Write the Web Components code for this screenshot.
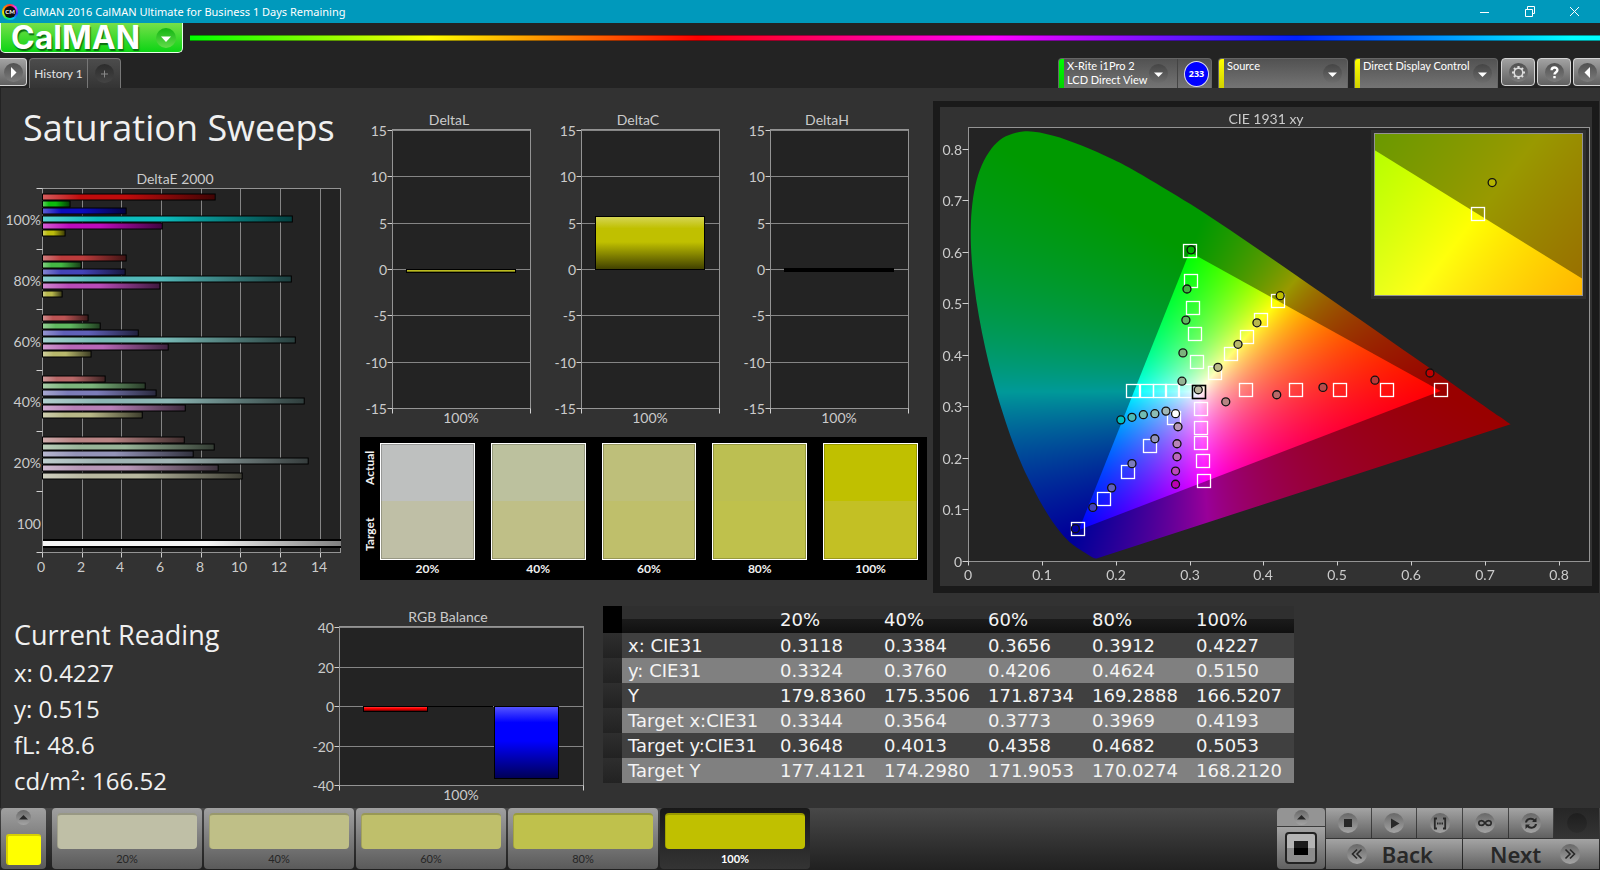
<!DOCTYPE html>
<html lang="en">
<head>
<meta charset="utf-8">
<title>CalMAN 2016</title>
<style>
html,body{margin:0;background:#323232}
body{font-family:"Open Sans","Noto Sans",sans-serif;color:#f0f0f0}
</style>
</head>
<body>
<cal-app></cal-app>
<script>
const define=(name,css,html,Base=HTMLElement,init)=>{
  const tpl=document.createElement('template');
  tpl.innerHTML=`<style>*{box-sizing:border-box}button{font:inherit;color:inherit;border:0;margin:0;padding:0;background:none}${css}</style>${html}`;
  customElements.define(name,class extends Base{
    constructor(){super();this.attachShadow({mode:'open'}).append(tpl.content.cloneNode(true));}
    connectedCallback(){if(super.connectedCallback)super.connectedCallback();if(init)init.call(this,this.shadowRoot);}
  });
};

/* ---------- charts ---------- */
class Chart extends HTMLElement{
  connectedCallback(){
    new ResizeObserver(()=>this.refresh()).observe(this);
    this.refresh();
  }
  refresh(){
    const W=this.clientWidth,H=this.clientHeight;
    if(!W||!H)return;
    const svg=this.shadowRoot.querySelector('svg');
    svg.setAttribute('viewBox',`0 0 ${W} ${H}`);
    svg.innerHTML=this.draw(W,H);
  }
}
const chartCss=`:host{display:block;position:relative;min-width:0;font:14px Lato,"Open Sans",sans-serif}
svg{display:block;width:100%;height:100%;overflow:visible;position:absolute;inset:0}
text{fill:#cbcbcb}`;
const R=Math.round;
const line=(x1,y1,x2,y2,c='#858585')=>`<path d="M${R(x1)+.5} ${R(y1)+.5}L${R(x2)+.5} ${R(y2)+.5}" stroke="${c}" fill="none"/>`;
const frame=(l,t,r,b)=>`<rect x="${R(l)+.5}" y="${R(t)+.5}" width="${R(r-l)}" height="${R(b-t)}" fill="none" stroke="#949494"/>`;
const txt=(x,y,s,a='middle')=>`<text x="${R(x)}" y="${R(y)+5}" text-anchor="${a}">${s}</text>`;
const mix=(c,d,k)=>'rgb('+[1,3,5].map(i=>R(parseInt(c.substr(i,2),16)*(1-k)+d*k)).join()+')';
const grad=(id,c,v)=>`<linearGradient id="${id}" x1="0" y1="0" x2="${v?0:1}" y2="${v?1:0}"><stop offset="0" stop-color="${mix(c,255,.33)}"/><stop offset=".22" stop-color="${c}"/><stop offset=".48" stop-color="${c}"/><stop offset="1" stop-color="${mix(c,0,.66)}"/></linearGradient>`;

define('delta-e-chart',chartCss,'<svg role="img" aria-label="DeltaE 2000"></svg>',class extends Chart{
  draw(W,H){
    const l=41,r=W-8,t=23,b=H-28,k=(r-l)/15.03,g=(b-t)/6;
    const data=[['100%',8.76,1.44,4.27,12.65,6.09,1.19],['80%',4.27,2,4.22,12.6,5.97,1.04],['60%',2.35,2.96,4.88,12.8,6.39,2.5],['40%',3.21,5.23,5.78,13.25,7.25,5.08],['20%',7.2,8.71,7.65,13.45,8.91,10.12],['100']];
    const cols=[['#c00c0c','#0cbc0c','#0c0cbc','#0cbcbc','#bc0cbc','#bcbc0c'],['#bc3c3c','#44b844','#4444b8','#54b8b8','#b84cb8','#b8b84c'],['#bc5454','#60b860','#6060b8','#78bab6','#b868b8','#b8b86c'],['#b86868','#7cb47c','#7c7cb8','#8cb6b4','#b880b8','#b8b888'],['#b88484','#98b498','#9494b8','#a0b4b4','#b898b8','#b8b8a0']];
    let s=`<rect x="${l}" y="${t}" width="${r-l}" height="${b-t}" fill="#232323"/>`;
    for(let v=0;v<=14;v+=2){if(v)s+=line(l+v*k,t,l+v*k,b);s+=line(l+v*k,b,l+v*k,b+5,'#d0d0d0')+txt(l+v*k-1,b+15,v);}
    s+=frame(l,t,r,b)+txt(W/2,14,'DeltaE 2000');
    data.forEach((d,i)=>{
      s+=txt(l-1,t+g*(i+.5)+2,d[0],'end')+line(l-6,t+g*i,l,t+g*i,'#d0d0d0');
      d.slice(1).forEach((v,j)=>{
        const y=R(t+g*i+9+j*7.2),w=v*k;
        s+=grad('e'+i+j,cols[i][j])+`<rect x="${l}" y="${y-3.5}" width="${w}" height="7" fill="#000"/><rect x="${l+1}" y="${y-2.5}" width="${w-2}" height="5" fill="url(#e${i}${j})"/>`;
      });
    });
    s+=line(l-6,b,l,b,'#d0d0d0');
    s+=`<linearGradient id="w"><stop offset=".55" stop-color="#f4f4f4"/><stop offset="1" stop-color="#808080"/></linearGradient><rect x="${l+1}" y="${b-13}" width="${r-l}" height="9" fill="#000"/><rect x="${l+1}" y="${b-11}" width="${r-l}" height="5" fill="url(#w)"/>`;
    return s;
  }
});

define('level-chart',chartCss,'<svg role="img"></svg>',class extends Chart{
  draw(W,H){
    const A=n=>this.getAttribute(n),l=+A('gutter'),r=W-7,t=20,b=H-(+A('foot')),max=+A('max'),step=+A('step'),t0=t+1;
    const y=v=>t0+(b-t0)*(max-v)/(2*max);
    let s=`<rect x="${l}" y="${t}" width="${r-l}" height="${b-t}" fill="#232323"/>`;
    for(let v=-max;v<=max;v+=step)s+=line(l,y(v),r,y(v))+line(l-5,y(v),l,y(v),'#d0d0d0')+txt(l-5,y(v)+1,v,'end');
    s+=frame(l,t,r,b)+line(l,b,l,b+5,'#d0d0d0')+line(r,b,r,b+5,'#d0d0d0');
    s+=txt(W/2,11,A('label'))+txt((l+r)/2,b+10,'100%');
    const bars=A('bars').split(';').map(x=>x.split(',')),x0=l+(r-l)*.1,bw=(r-l)*.8/bars.length;
    bars.forEach(([v,c],i)=>{
      const top=R(Math.min(y(v),y(0))),h=Math.max(R(Math.abs(y(v)-y(0))),+v===0?0:3)+1,x=R(x0+i*bw);
      s+=grad('b'+i,c,1)+`<rect x="${x}" y="${top}" width="${R(bw)}" height="${h}" fill="#000"/>`;
      if(h>3)s+=`<rect x="${x+1}" y="${top+1}" width="${R(bw)-2}" height="${h-2}" fill="url(#b${i})"/>`;
    });
    return s;
  }
});

/* ---------- CIE 1931 chromaticity diagram ---------- */
const LOCUS=[.1741,.005,.1733,.0048,.1714,.0051,.1689,.0069,.1644,.0109,.1566,.0177,.151,.0227,.144,.0297,.1355,.0399,.1241,.0578,.1096,.0868,.0913,.1327,.0687,.2007,.0454,.295,.0235,.4127,.0082,.5384,.0039,.6548,.0139,.7502,.0389,.812,.0743,.8338,.1142,.8262,.1547,.8059,.1929,.7816,.2296,.7543,.3016,.6923,.3731,.6245,.4441,.5547,.5125,.4866,.5752,.4242,.627,.3725,.6658,.334,.6915,.3083,.719,.2809,.7347,.2653];
const GAMUT=[[.64,.33],[.3,.6],[.15,.06]];
const TARGETS=[.3,.602,.302,.544,.304,.491,.307,.44,.31,.386,.224,.33,.242,.33,.2595,.33,.2767,.33,.2947,.33,.315,.295,.316,.258,.316,.229,.318,.194,.3195,.156,.1485,.0625,.1837,.121,.216,.172,.247,.2225,.279,.278,.3344,.3648,.3564,.4013,.3773,.4358,.3969,.4682,.4193,.5053,.3763,.332,.4436,.332,.503,.332,.567,.332,.64,.332];
const READINGS=[[.349,.309,'#b88484'],[.418,.3227,'#b86868'],[.4806,.337,'#b84c4c'],[.551,.351,'#b83838'],[.6255,.365,'#c00000'],
[.302,.604,'#00b400'],[.2965,.528,'#44b444'],[.295,.4676,'#60b460'],[.291,.404,'#7cb47c'],[.2897,.349,'#94b494'],
[.207,.274,'#00c0c0'],[.222,.279,'#4cbcb8'],[.2374,.284,'#70bcb4'],[.253,.286,'#8cbcb4'],[.268,.291,'#a0b8b8'],[.281,.286,'#ffffff'],
[.2843,.2606,'#b898b8'],[.283,.2276,'#b884b8'],[.283,.2024,'#bc68bc'],[.281,.1746,'#bc48bc'],[.281,.149,'#bc00b4'],
[.253,.2373,'#9494bc'],[.222,.189,'#7c7cbc'],[.1945,.142,'#6060bc'],[.169,.104,'#4444bc'],[.1453,.0627,'#0000a0'],
[.3118,.3324,'#b8b8a0'],[.3384,.376,'#b8b888'],[.3656,.4206,'#b8b86c'],[.3912,.4624,'#b8b84c'],[.4227,.515,'#c0c000']];
const chroma=(x,y)=>{
  const z=1-x-y;
  let c=[3.2406*x-1.5372*y-.4986*z,-.9689*x+1.8758*y+.0415*z,.0557*x-.204*y+1.057*z].map(v=>Math.max(0,v));
  const m=Math.max(...c)||1;
  return c.map(v=>255*v/m);
};
function paint(ctx,x,y,w,h,ox,oy,kx,ky,locus){
  x=R(x);y=R(y);w=R(w);h=R(h);
  const layer=f=>{
    const c=document.createElement('canvas');c.width=w;c.height=h;
    const g=c.getContext('2d'),im=g.createImageData(w,h);let p=0;
    for(let j=0;j<h;j++)for(let i=0;i<w;i++){
      const q=chroma((x+i+.5-ox)/kx,(oy-y-j-.5)/ky);
      im.data[p++]=q[0]*f;im.data[p++]=q[1]*f;im.data[p++]=q[2]*f;im.data[p++]=255;
    }
    g.putImageData(im,0,0);return c;
  };
  const P=(a,b)=>[ox+a*kx,oy-b*ky];
  ctx.save();ctx.beginPath();ctx.rect(x,y,w,h);ctx.clip();
  if(locus){
    const pts=[];for(let i=0;i<LOCUS.length;i+=2)pts.push(P(LOCUS[i],LOCUS[i+1]));
    ctx.beginPath();ctx.moveTo(...pts[0]);
    for(let i=0;i<pts.length-1;i++){
      const a=pts[i-1]||pts[i],b=pts[i],c=pts[i+1],d=pts[i+2]||c;
      ctx.bezierCurveTo(b[0]+(c[0]-a[0])/6,b[1]+(c[1]-a[1])/6,c[0]-(d[0]-b[0])/6,c[1]-(d[1]-b[1])/6,...c);
    }
    ctx.closePath();ctx.clip();
  }
  ctx.drawImage(layer(.6),x,y);
  ctx.beginPath();GAMUT.forEach(p=>ctx.lineTo(...P(...p)));ctx.closePath();ctx.clip();
  ctx.drawImage(layer(1),x,y);
  ctx.restore();
}
define('cie-diagram',chartCss+`:host{background:#323232}canvas{position:absolute;left:0;top:0}`,
'<canvas></canvas><svg role="img" aria-label="CIE 1931 xy"></svg>',class extends Chart{
  draw(W,H){
    const l=28,r=W-3,t=20,b=H-25,kx=(r-l)/.8408,ky=(b-t)/.8425;
    const cv=this.shadowRoot.querySelector('canvas');cv.width=W;cv.height=H;
    const g=cv.getContext('2d');
    g.fillStyle='#232323';g.fillRect(l,t,r-l,b-t);
    paint(g,l,t,r-l,b-t,l,b,kx,ky,true);
    const iw=R((r-l)*.335),ih=R((b-t)*.374),ix=r-7-iw,iy=t+6,sx=iw/.05,sy=ih/.05,ox=ix+iw/2-.4193*sx,oy=iy+ih/2+.5053*sy;
    g.fillStyle='#2f2f2f';g.fillRect(ix-3,iy-3,iw+7,ih+7);
    paint(g,ix,iy,iw,ih,ox,oy,sx,sy,false);
    let s=frame(l,t,r,b)+txt((l+r)/2-13,12,'CIE 1931 xy');
    for(let i=0;i<9;i++){
      const v=i?'0.'+i:'0';
      s+=line(l+i*kx/10,b,l+i*kx/10,b+4,'#d0d0d0')+txt(l+i*kx/10,b+14,v)+line(l-6,b-i*ky/10,l,b-i*ky/10,'#d0d0d0')+txt(l-6,b-i*ky/10+1,v,'end');
    }
    const sq=(x,y,c='#fff')=>`<rect x="${R(x)-6.5}" y="${R(y)-6.5}" width="13" height="13" fill="none" stroke="${c}" stroke-width="${c=='#fff'?1.3:1.6}"/>`;
    for(let i=0;i<TARGETS.length;i+=2)s+=sq(l+TARGETS[i]*kx,b-TARGETS[i+1]*ky);
    s+=sq(l+.3127*kx,b-.329*ky,'#000');
    const ci=(x,y,c)=>`<circle cx="${x}" cy="${y}" r="4" fill="${c}" stroke="#111" stroke-width="1.3"/>`;
    READINGS.forEach(q=>s+=ci(l+q[0]*kx,b-q[1]*ky,q[2]));
    s+=frame(ix,iy,ix+iw,iy+ih)+sq(ox+.4193*sx,oy-.5053*sy)+ci(ox+.4227*sx,oy-.515*sy,'#b4b400');
    return s;
  }
});

/* ---------- window chrome ---------- */
define('title-bar',`:host{display:flex;align-items:center;height:23px;background:#0099bc;color:#fff;font:11px/23px "Noto Sans",sans-serif;padding:0 3px 0 2px}
.logo{width:16px;height:16px;border-radius:50%;background:conic-gradient(#f33,#f3f,#33f,#0cf,#0e6,#de0,#f80,#f33);display:grid;place-items:center;margin-right:5px}
.logo i{width:12px;height:12px;border-radius:50%;background:#111;color:#fff;font:bold 6px/12px Lato,sans-serif;text-align:center}
.t{flex:1}button{width:45px;height:21px;display:grid;place-items:center}svg{width:11px;height:11px;fill:none;stroke:#fff}`,
`<span class="logo"><i>CM</i></span><span class="t">CalMAN 2016 CalMAN Ultimate for Business 1 Days Remaining</span>
<button aria-label="Minimize"><svg viewBox="0 0 11 11"><path d="M1 6.5H10"/></svg></button>
<button aria-label="Restore"><svg viewBox="0 0 11 11"><path d="M1.500 3.500H8.500V10.500H1.500ZM3.500 3.500V.5H10.500V7.500H8.500"/></svg></button>
<button aria-label="Close"><svg viewBox="0 0 11 11"><path d="M1 1L10 10M10 1L1 10"/></svg></button>`);

define('round-icon',`:host{display:grid;place-items:center;flex:none;width:19px;height:19px;border-radius:50%;background:linear-gradient(var(--ra,#505050),var(--rb,#7c7c7c))}
svg,::slotted(svg){width:100%;height:100%;display:block}`,`<slot></slot>`);

define('tool-button',`:host{display:block;height:28px}
button{width:100%;height:100%;border-radius:4px;border:1px solid #d4d4d4;background:linear-gradient(#a2a2a2,#606060);display:grid;place-items:center}
:host([edge=left]) button{border-left:0;border-radius:0 4px 4px 0}
:host([edge=right]) button{border-right:0;border-radius:4px 0 0 4px}`,
`<button><round-icon><slot></slot></round-icon></button>`,HTMLElement,function(r){r.querySelector('button').setAttribute('aria-label',this.getAttribute('label'));});

define('device-picker',`:host{display:flex;min-width:0;height:30px;border-radius:4px 4px 0 0;border:1px solid #666;border-bottom:0;background:linear-gradient(#525252,#747474);overflow:hidden;font:11px/14px Lato,sans-serif;color:#fff}
.bar{width:5px;background:linear-gradient(var(--c,#ff0),color-mix(in srgb,var(--c,#ff0) 82%,#000))}
.main{flex:1;display:flex;text-align:left;padding-left:3px}
.main span{flex:1;white-space:nowrap}
round-icon{margin:5px var(--gap,5px) 0 0;--ra:#454545;--rb:#6c6c6c}svg{width:19px;height:19px}`,
`<i class="bar"></i><button class="main"><span><slot></slot></span><round-icon><svg viewBox="0 0 19 19"><path d="M5 8.500H14L9.500 13Z" fill="#fff"/></svg></round-icon></button><slot name="extra"></slot>`);

define('app-header',`:host{display:block;height:65px;background:#232323}
.brand{display:flex;align-items:flex-start;height:35px}
.logo{width:183px;height:30px;background:linear-gradient(#76e04a,#0cd414);border:1px solid #e8ffe8;border-top:0;border-radius:0 0 5px 5px;display:flex;align-items:center;padding:0 6px 0 10px;justify-content:space-between;font:700 32px/28px Inter,sans-serif;color:#fff;text-shadow:1px 2px 1px #0a7010}
.logo round-icon{--ra:#12b412;--rb:#63dc4a;width:20px;height:20px}
.rainbow{flex:1;margin:12px 0 0 7px;height:6px;border:1px solid rgba(0,0,0,.4);border-width:1px 0;background:linear-gradient(90deg,#0f0 0%,#ff0 17%,#f00 36%,#f0f 57%,#02f 78.500%,#0ff 98%)}
.tabs{display:flex;height:30px}
.hist{display:flex;margin-left:2px;height:30px;border:1px solid #777;border-bottom:0;border-radius:4px 4px 0 0;background:linear-gradient(#4c4c4c,#343434);color:#e4e4e4;font:12px/29px Lato,sans-serif}
.hist .n{width:57px;white-space:nowrap;text-align:center}.hist .p{border-left:1px solid #777;width:33px;display:grid;place-items:center}
.hist round-icon{--ra:#2c2c2c;--rb:#444}
.sp{flex:1}
tool-button{width:34px;margin-left:2px}
device-picker{margin-left:6px}
.cnt{align-self:center;margin:0 2px 0 6px;width:25px;height:26px;border-radius:50%;background:#00f;border:1px solid #dde;color:#fff;font:bold 9px/24px "Open Sans",sans-serif;text-align:center}
.ex{display:flex;border-left:1px solid #444}`,
`<div class="brand"><button class="logo">CalMAN<round-icon><svg viewBox="0 0 20 20"><path d="M5 8.500H15L10 14Z" fill="#fff"/></svg></round-icon></button><div class="rainbow"></div></div>
<div class="tabs"><tool-button edge="left" label="Expand" style="width:27px;margin:0"><svg viewBox="0 0 19 19"><path d="M7 4L12.500 9.500L7 15Z" fill="#fff"/></svg></tool-button>
<div class="hist"><button class="n">History 1</button><button class="p" aria-label="Add"><round-icon><svg viewBox="0 0 19 19"><path d="M6 10H13M9.500 6.500V13.500" stroke="#888"/></svg></round-icon></button></div>
<span class="sp"></span>
<device-picker style="width:154px;--c:#0f0;--gap:9px">X-Rite i1Pro 2<br>LCD Direct View<span slot="extra" class="ex"><span class="cnt">233</span></span></device-picker>
<device-picker style="width:130px">Source</device-picker>
<device-picker style="width:144px">Direct Display Control</device-picker>
<tool-button label="Settings" style="margin-left:3px"><svg viewBox="0 0 19 19"><circle cx="9.500" cy="9.500" r="4.300" fill="none" stroke="#ddd" stroke-width="1.500"/><path d="M9.500 5V3M9.500 16V14M5 9.500H3M16 9.500H14M6.300 6.300L5 5M12.700 12.700L14 14M12.700 6.300L14 5M6.300 12.700L5 14" stroke="#ddd" stroke-width="2.200"/></svg></tool-button>
<tool-button label="Help"><svg viewBox="0 0 19 19"><path d="M6.600 7.300C6.600 3.600 12.400 3.600 12.400 7C12.400 9.300 9.500 9.200 9.500 11.600M9.500 13V15.300" fill="none" stroke="#fff" stroke-width="2.400"/></svg></tool-button>
<tool-button edge="right" label="Collapse" style="width:27px"><svg viewBox="0 0 19 19"><path d="M12 4L6.500 9.500L12 15Z" fill="#fff"/></svg></tool-button></div>`);

/* ---------- content ---------- */
define('swatch-panel',`:host{display:flex;background:#000;height:143px;padding:6px 9px 0 0;color:#f0f0f0;font:bold 12px Lato,sans-serif}
.side{width:20px;display:grid;grid-template-rows:50px 50px;gap:16px;align-content:start;justify-items:center}
.side span{writing-mode:vertical-rl;transform:rotate(180deg);text-align:center;line-height:16px}
.list{flex:1;display:grid;grid-template-columns:repeat(5,1fr);gap:16px;text-align:center}
.sw{height:117px;border:1px solid #fff;box-shadow:inset 0 0 0 1px rgba(0,0,0,.2);background:linear-gradient(var(--a) 49.500%,var(--t) 49.500%)}
p{margin:0;line-height:18px}`,
`<div class="side"><span>Actual</span><span>Target</span></div><div class="list"></div>`,HTMLElement,function(r){
  r.querySelector('.list').innerHTML=[['20%','#bec0bf','#bfbfa6'],['40%','#bcc19e','#bfbf87'],['60%','#bebf7a','#bfbf6b'],['80%','#bcbf52','#bfc14c'],['100%','#c0c000','#c3c024']].map(([n,a,t])=>`<div><div class="sw" style="--a:${a};--t:${t}"></div><p>${n}</p></div>`).join('');
});

define('data-grid',`:host{display:block}
table{border-collapse:collapse;table-layout:fixed;width:691px;font:18px/25px "DejaVu Sans",sans-serif;color:#f4f4f4}
td,th{padding:0 0 0 6px;height:25px;text-align:left;font-weight:400;white-space:nowrap}
thead th{height:27px;background:linear-gradient(#2f2f2f 48%,#1b1b1b 48%,#101010)}
thead td{background:#000}
tbody tr{background:#404040}tbody tr:nth-child(even){background:#808080}
tbody td:first-child{background:linear-gradient(#2e2e2e,#222)}
.k{width:19px}.n{width:152px}`,`<table></table>`,HTMLElement,function(r){
  const rows=[['x: CIE31','0.3118','0.3384','0.3656','0.3912','0.4227'],['y: CIE31','0.3324','0.3760','0.4206','0.4624','0.5150'],['Y','179.8360','175.3506','171.8734','169.2888','166.5207'],['Target x:CIE31','0.3344','0.3564','0.3773','0.3969','0.4193'],['Target y:CIE31','0.3648','0.4013','0.4358','0.4682','0.5053'],['Target Y','177.4121','174.2980','171.9053','170.0274','168.2120']];
  r.querySelector('table').innerHTML='<colgroup><col class="k"><col class="n"><col span="5"></colgroup><thead><tr><td></td><th></th>'+['20%','40%','60%','80%','100%'].map(x=>`<th scope="col">${x}</th>`).join('')+'</tr></thead><tbody>'+rows.map(a=>`<tr><td></td><th scope="row">${a[0]}</th>${a.slice(1).map(x=>`<td>${x}</td>`).join('')}</tr>`).join('')+'</tbody>';
});

define('current-reading',`:host{display:block;padding:14px 0 0 13px}
h2{margin:0;font:400 27px/40px "Open Sans",sans-serif}p{margin:0;font-size:24px;line-height:36px}`,
`<h2>Current Reading</h2><p>x: 0.4227</p><p>y: 0.515</p><p>fL: 48.6</p><p>cd/m²: 166.52</p>`);

define('work-area',`:host{display:block;flex:1;background:#323232;border-left:1px solid #232323}
.top{display:grid;grid-template-columns:359fr 573fr 667fr;padding-top:13px}
.top>*{min-width:0}.a{margin-right:12px}.b{margin:8px 6px 0 0}.c{margin-right:1px;border:solid #1a1a1a;border-width:6px 7px 7px;height:492px}
h1{margin:2px 0 0;padding-left:22px;font:400 36px/50px "Open Sans",sans-serif}
delta-e-chart{height:415px;margin-top:12px}
.deltas{display:grid;grid-template-columns:repeat(3,1fr);gap:12px;padding-right:12px}
.deltas level-chart{height:318px}swatch-panel{margin-top:10px}
cie-diagram{height:100%}
.bot{display:flex;align-items:flex-start;padding:8px 0 2px}
current-reading{width:305px}.bot level-chart{width:284px;height:198px;margin-top:5px}
data-grid{margin:5px 0 0 13px}`,
`<div class="top"><div class="a"><h1>Saturation Sweeps</h1><delta-e-chart></delta-e-chart></div>
<div class="b"><div class="deltas">
<level-chart label="DeltaL" gutter="32" foot="19" max="15" step="5" bars="-.2,#bcbc20"></level-chart>
<level-chart label="DeltaC" gutter="32" foot="19" max="15" step="5" bars="5.7,#c0c000"></level-chart>
<level-chart label="DeltaH" gutter="32" foot="19" max="15" step="5" bars=".15,#000000"></level-chart></div>
<swatch-panel></swatch-panel></div>
<div class="c"><cie-diagram></cie-diagram></div></div>
<div class="bot"><current-reading></current-reading>
<level-chart label="RGB Balance" gutter="33" foot="19" max="40" step="20" bars="-2.4,#ff0000;0,#000000;-36.700,#0000ff"></level-chart>
<data-grid></data-grid></div>`);

/* ---------- bottom bar ---------- */
define('level-button',`:host{display:block;flex:0 1 150px}
button{width:100%;height:61px;border-radius:4px;background:linear-gradient(#a0a0a0,#5a5a5a);padding:5px 5px 0;font:11px/20px Lato,sans-serif;color:#262626;display:flex;flex-direction:column}
i{display:block;width:100%;height:36px;border-radius:4px;background:var(--c);border:1px solid rgba(0,0,0,.15);border-top:2px solid rgba(0,0,0,.2);border-right:0;border-bottom:0}
span{width:100%;text-align:center}
:host([selected]) button{background:linear-gradient(#181818,#343434);color:#fff;font-weight:bold}`,`<button><i></i><span><slot></slot></span></button>`);

define('control-bar',`:host{display:flex;height:62px;background:linear-gradient(#484848,#202020);padding-right:1px}
.sel{width:45px;height:61px;margin:0 6px 0 1px;border-radius:4px;background:linear-gradient(#a0a0a0,#5a5a5a);display:flex;flex-direction:column;align-items:center}
round-icon{--ra:#686868;--rb:#a4a4a4}
.up{width:15px;height:15px;margin-top:2px}
.sel i{width:35px;height:31px;margin-top:9px;border-radius:3px;background:#ff0;border:2px solid #d8d000;border-right:0;border-bottom:0}
.levels{display:flex;gap:2px;flex:1}
.side{width:48px;display:grid;grid-template-rows:18px 42px;gap:1px;margin-right:1px}
.side button,.pad button{background:linear-gradient(#a4a4a4,#606060);display:grid;place-items:center;color:#282828}
.side button:first-child{border-radius:4px 4px 0 0;background:#949494}.side button:last-child{border-radius:0 0 4px 4px}
.side .up{margin:0}
.pad{width:273px;display:grid;grid-template-columns:repeat(6,1fr);grid-template-rows:30px 30px;gap:1px}
.pad round-icon{width:20px;height:20px}
.pad .off{background:linear-gradient(#262626,#343434)}.off round-icon{--ra:#1e1e1e;--rb:#2c2c2c}
.pad .nav{grid-column:span 3;display:flex;align-items:center;justify-content:space-between;font:600 22px/30px "Noto Sans",sans-serif;padding:0 29px 0 21px}
.pad .nav.x{padding:0 19px 0 27px}
svg{width:20px;height:20px;fill:none;stroke:#282828;stroke-width:1.600}.up svg{width:15px;height:15px}
.big{width:32px;height:32px;border:2px solid #222;border-radius:4px;background:linear-gradient(#b4b4b4 50%,#8c8c8c 50%);display:grid;place-items:center}
.big:before{content:"";width:14px;height:14px;background:linear-gradient(#1c1c1c 50%,#000 50%)}`,
`<button class="sel" aria-label="Color"><round-icon class="up"><svg viewBox="0 0 15 15"><path d="M3 9.500L7.500 5L12 9.500Z" fill="#282828" stroke="none"/></svg></round-icon><i></i></button>
<div class="levels"><level-button style="--c:#bfbfa6">20%</level-button><level-button style="--c:#bfbf87">40%</level-button><level-button style="--c:#bfbf6b">60%</level-button><level-button style="--c:#bfc14c">80%</level-button><level-button selected style="--c:#c0c000">100%</level-button></div>
<div class="side"><button aria-label="More"><round-icon class="up"><svg viewBox="0 0 15 15"><path d="M3 9.500L7.500 5L12 9.500Z" fill="#282828" stroke="none"/></svg></round-icon></button><button aria-label="Stop reading"><span class="big"></span></button></div>
<div class="pad">
<button aria-label="Stop"><round-icon><svg viewBox="0 0 20 20"><path d="M6 6H14V14H6Z" fill="#282828" stroke="none"/></svg></round-icon></button>
<button aria-label="Play"><round-icon><svg viewBox="0 0 20 20"><path d="M7 5.500L15.500 10.500L7 15.500Z" fill="#282828" stroke="none"/></svg></round-icon></button>
<button aria-label="Read series"><round-icon><svg viewBox="0 0 20 20"><path d="M7 5.500H4.800V15.500H7M13 5.500H15.200V15.500H13M7 10.500H8.500M9.300 10.500H10.700M11.500 10.500H13" stroke-width="1.800"/></svg></round-icon></button>
<button aria-label="Continuous"><round-icon><svg viewBox="0 0 20 20"><path d="M10 10C8 6.800 3.800 7 3.800 10S8 13.200 10 10S16.200 7 16.200 10S12 13.200 10 10Z"/></svg></round-icon></button>
<button aria-label="Refresh"><round-icon><svg viewBox="0 0 20 20"><path d="M5 9.500C5.500 5.500 11 4.500 13.500 7.500M15 11C14.500 15 9 16 6.500 13" stroke-width="2"/><path d="M15.500 4.500V9H11ZM4.500 16V11.500H9Z" fill="#282828" stroke="none"/></svg></round-icon></button>
<button class="off" aria-label="Idle"><round-icon></round-icon></button>
<button class="nav"><round-icon><svg viewBox="0 0 20 20"><path d="M10 5.500L5.500 10L10 14.500M14.500 5.500L10 10L14.500 14.500"/></svg></round-icon><span>Back</span></button>
<button class="nav x"><span>Next</span><round-icon><svg viewBox="0 0 20 20"><path d="M5.500 5.500L10 10L5.500 14.500M10 5.500L14.500 10L10 14.500"/></svg></round-icon></button></div>`);

define('cal-app',`:host{display:flex;flex-direction:column;min-height:100vh}`,`<title-bar></title-bar><app-header></app-header><work-area></work-area><control-bar></control-bar>`);
</script>
</body>
</html>
